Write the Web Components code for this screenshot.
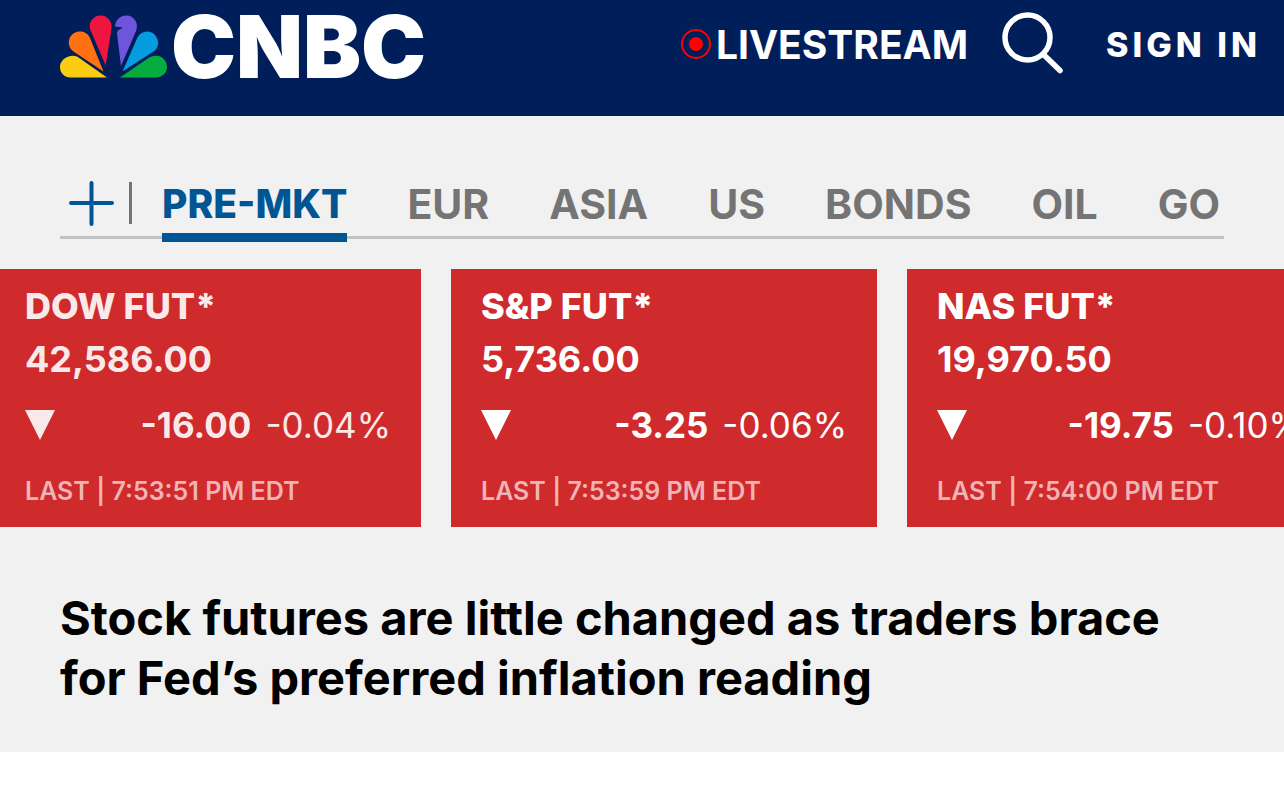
<!DOCTYPE html>
<html lang="en">
<head>
<meta charset="utf-8">
<meta name="viewport" content="width=device-width, initial-scale=1">
<title>CNBC</title>
<style>
body { margin: 0; background: #fff; color: #000; font-family: Inter, "Open Sans", sans-serif; }
</style>
</head>
<body>
<site-header></site-header>
<market-banner>
  <market-tabs slot="tabs"></market-tabs>
  <quote-strip slot="quotes">
    <quote-card class="leaving"><span slot="name">DOW FUT*</span><span slot="price">42,586.00</span><span slot="change">-16.00</span><span slot="percent">-0.04%</span><span slot="time">LAST | 7:53:51 PM EDT</span></quote-card>
    <quote-card><span slot="name">S&amp;P FUT*</span><span slot="price">5,736.00</span><span slot="change">-3.25</span><span slot="percent">-0.06%</span><span slot="time">LAST | 7:53:59 PM EDT</span></quote-card>
    <quote-card><span slot="name">NAS FUT*</span><span slot="price">19,970.50</span><span slot="change">-19.75</span><span slot="percent">-0.10%</span><span slot="time">LAST | 7:54:00 PM EDT</span></quote-card>
  </quote-strip>
  <top-headline slot="headline">Stock futures are little changed as traders brace for Fed’s preferred inflation reading</top-headline>
</market-banner>
<script>
const define = (name, html) => customElements.define(name, class extends HTMLElement {
  constructor() {
    super();
    const t = document.createElement('template');
    t.innerHTML = html;
    this.attachShadow({ mode: 'open' }).append(t.content.cloneNode(true));
  }
});

define('peacock-mark', `
<style>
  :host { display: block; flex: none; width: 108px; height: 64px; }
  svg { display: block; }
</style>
<svg width="108" height="64" viewBox="0 0 108 64" aria-hidden="true">
  <path fill="#fccc12" d="M47 62.5 17.500 41.700C14.500 40.500 11 40.500 8 41.700 3 43.500 0 47.500 0 52c0 6 4.500 10.500 10.500 10.500z"/>
  <path fill="#ff7112" d="M43.500 56.500 29.800 22.500C27.500 18 23.500 16.300 19.500 16.500 13.300 16.800 8.700 21.600 8.800 27.600c.1 3.900 1.800 7 5 9.200z"/>
  <path fill="#ef1541" d="M45.700 50.500 51.400 14.500C53 7 47.500.6 40.800.6 33.500.6 28.500 7 30 14z"/>
  <path fill="#6e55dc" d="M61 51 75.800 16.500C79.500 8.500 74 .6 66.300.6 60.200.6 55.700 4.600 55 11.600l7.500.8C61.700 14.300 59.300 13.800 58 15.500 57 16.700 57 18 57.100 19.500z"/>
  <path fill="#069de0" d="M62.500 56.500 93.500 36.500C97.500 34 98.500 30 98 26.500 97.200 20.500 92 16.300 87 16.500 82.800 16.600 79.500 18.800 77.500 22.500z"/>
  <path fill="#05ac3f" d="M60 62.500H95.500C102 62.500 107 58 107 52 107 46 102.500 40.800 96.500 40.700 93.500 40.600 91.500 41.100 89.500 42.300z"/>
</svg>`);

define('site-header', `
<style>
  :host { display: block; background: #001e5a; color: #fff; }
  header { display: flex; align-items: flex-start; box-sizing: border-box; height: 116px; padding: 0 23px 0 60px; }
  .logo { display: flex; align-items: center; height: 93px; gap: 3px; color: inherit; text-decoration: none; }
  .word { font-weight: 900; font-size: 87px; line-height: 93px; }
  nav { display: flex; align-items: center; height: 88px; margin-left: auto; }
  a { color: inherit; text-decoration: none; }
  .live { display: flex; align-items: center; gap: 5px; font-weight: 700; font-size: 39px; }
  button { border: 0; padding: 0; background: none; color: inherit; cursor: pointer; font: inherit; }
  .search { margin: 0 42px 0 34px; height: 64px; }
  .sign { font-weight: 800; font-size: 34px; letter-spacing: 4px; }
  svg { display: block; }
</style>
<header>
  <a class="logo" href="#"><peacock-mark></peacock-mark><span class="word">CNBC</span></a>
  <nav>
    <a class="live" href="#live"><svg width="30" height="30" viewBox="0 0 30 30" aria-hidden="true"><circle cx="15" cy="15" r="14" fill="none" stroke="#f00" stroke-width="2"/><circle cx="15" cy="15" r="7" fill="#f00"/></svg>LIVESTREAM</a>
    <button class="search" aria-label="Search"><svg width="62" height="64" viewBox="0 0 62 64" fill="none" stroke="#fff" stroke-width="5.500" stroke-linecap="round" aria-hidden="true"><circle cx="25.500" cy="25.500" r="22.500"/><path d="M42 43 58 58.500"/></svg></button>
    <button class="sign">SIGN IN</button>
  </nav>
</header>`);

define('market-banner', `
<style>
  :host { display: block; background: #f1f1f1; overflow: hidden; padding: 60px 0 44px; }
  .tabs, .headline { padding: 0 60px; }
  .quotes { margin: 27px 0 61px; }
</style>
<div class="tabs"><slot name="tabs"></slot></div>
<div class="quotes"><slot name="quotes"></slot></div>
<div class="headline"><slot name="headline"></slot></div>`);

define('market-tabs', `
<style>
  :host { display: block; }
  .bar { display: flex; height: 66px; overflow: hidden; background: linear-gradient(#c2c2c2, #c2c2c2) 0 60px / 100% 3px no-repeat; }
  button { flex: none; border: 0; padding: 0; background: none; cursor: pointer; color: #747474; font-family: inherit; font-size: 41px; line-height: 56px; font-weight: 700; }
  .add { display: flex; align-items: flex-start; box-sizing: border-box; width: 72px; padding: 4px 0 0 8px; }
  .add::after { content: ""; width: 3px; height: 42px; margin: 2px 0 0 15px; background: #747474; flex: none; }
  .list { display: flex; gap: 60px; margin-left: 30px; }
  .list button { height: 66px; padding-bottom: 10px; }
  .list [aria-selected=true] { color: #005594; font-size: 39px; font-weight: 800; padding-bottom: 1px; border-bottom: 9px solid #005594; }
  svg { display: block; flex: none; }
</style>
<div class="bar">
  <button class="add" aria-label="Add to watchlist"><svg width="46" height="46" viewBox="0 0 46 46" stroke="#005594" stroke-width="4" stroke-linecap="round" aria-hidden="true"><path d="M23.500 3V44M3 23H44"/></svg></button>
  <div class="list" role="tablist">
    <button role="tab" aria-selected="true">PRE-MKT</button>
    <button role="tab">EUR</button>
    <button role="tab">ASIA</button>
    <button role="tab">US</button>
    <button role="tab">BONDS</button>
    <button role="tab">OIL</button>
    <button role="tab">GO</button>
  </div>
</div>`);

define('quote-strip', `
<style>
  :host { display: flex; gap: 30px; margin-left: -5px; }
</style>
<slot></slot>`);

define('quote-card', `
<style>
  :host { display: block; flex: none; box-sizing: border-box; width: 426px; padding: 10px 30px; background: #cf2a2c; color: #fff; font-weight: 700; font-size: 36px; }
  :host(.leaving) { color: #fae9e9; }
  .name { font-weight: 800; line-height: 54px; }
  .price { line-height: 52px; }
  .row { display: flex; align-items: center; justify-content: flex-end; gap: 14px; font-size: 35px; line-height: 80px; }
  .row svg { margin-right: auto; }
  .percent { font-weight: 400; }
  .time { font-size: 25px; font-weight: 600; line-height: 52px; color: #f1b4b5; white-space: nowrap; }
</style>
<div class="name"><slot name="name"></slot></div>
<div class="price"><slot name="price"></slot></div>
<div class="row"><svg width="30" height="30" viewBox="0 0 30 30" aria-hidden="true"><path d="M0 0H30L15 30z" fill="currentColor"/></svg><span><slot name="change"></slot></span><span class="percent"><slot name="percent"></slot></span></div>
<div class="time"><slot name="time"></slot></div>`);

define('top-headline', `
<style>
  :host { display: block; }
  h1 { margin: 0; font-size: 47px; line-height: 60px; font-weight: 700; }
  a { color: inherit; text-decoration: none; }
</style>
<h1><a href="#story"><slot></slot></a></h1>`);
</script>
</body>
</html>
